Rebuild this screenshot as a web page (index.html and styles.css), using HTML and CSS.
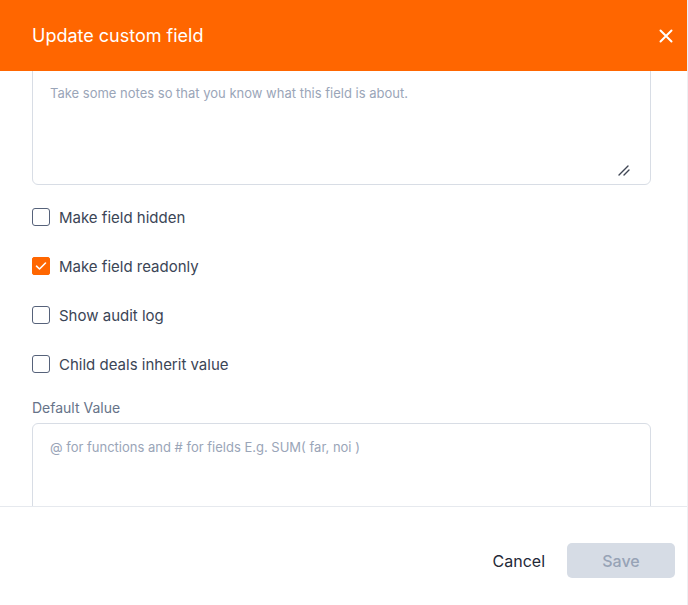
FILE: index.html
```html
<!DOCTYPE html>
<html lang="en">
<head>
  <meta charset="UTF-8">
  <title>Update custom field</title>
  <meta name="viewport" content="width=device-width, initial-scale=1">
  <link rel="stylesheet" href="styles.css">
</head>
<body>

  <div class="modal">
    <!-- Cabeçalho -->
    <div class="modal-header">
      <h3>Update custom field</h3>
      <button class="close" title="Close">
        <svg width="14" height="14" viewBox="0 0 14 14"><path d="M1.5 1.5 L12.5 12.5 M12.5 1.5 L1.5 12.5" stroke="#fff" stroke-width="2" stroke-linecap="round"/></svg>
      </button>
    </div>

    <!-- Corpo com scroll -->
    <div class="modal-body">
      <div class="notes-wrap">
        <textarea class="notes" placeholder="Take some notes so that you know what this field is about."></textarea>
        <svg class="grip" width="12" height="12" viewBox="0 0 12 12"><path d="M1 11 L10 2 M6 11 L11 6" stroke="#3f4654" stroke-width="1.4" stroke-linecap="round"/></svg>
      </div>

      <div class="options">
        <label class="check"><span class="box"></span>Make field hidden</label>
        <label class="check"><span class="box checked">
          <svg width="12" height="10" viewBox="0 0 12 10"><path d="M1.5 5.2 L4.5 8 L10.5 2" fill="none" stroke="#fff" stroke-width="1.6" stroke-linecap="round" stroke-linejoin="round"/></svg>
        </span>Make field readonly</label>
        <label class="check"><span class="box"></span>Show audit log</label>
        <label class="check"><span class="box"></span>Child deals inherit value</label>
      </div>

      <div class="field-label">Default Value</div>
      <textarea class="default" placeholder="@ for functions and # for fields E.g. SUM( far, noi )"></textarea>
    </div>

    <!-- Rodapé -->
    <div class="modal-footer">
      <button class="btn-cancel">Cancel</button>
      <button class="btn-save" disabled>Save</button>
    </div>
  </div>

</body>
</html>
```

FILE: styles.css
```css
body {
  margin: 0;
  font-family: Inter, "Noto Sans", sans-serif;
  background: #fff;
}

.modal {
  width: 688px;
  height: 605px;
  display: flex;
  flex-direction: column;
  border-right: 1px solid #eef0f3;
  box-sizing: border-box;
}

/* Cabeçalho */
.modal-header {
  height: 71px;
  flex: none;
  background: #ff6600;
  display: flex;
  align-items: center;
  justify-content: space-between;
  padding: 0 10px 0 32px;
}

.modal-header h3 {
  margin: 0;
  color: #fff;
  font-size: 18px;
  font-weight: 400;
}

.close {
  background: none;
  border: none;
  padding: 4px;
  display: flex;
  cursor: pointer;
}

/* Corpo */
.modal-body {
  flex: 1;
  overflow: hidden;
  padding: 0 36px 0 32px;
}

textarea {
  display: block;
  width: 100%;
  box-sizing: border-box;
  border: 1px solid #d8dde5;
  border-radius: 6px;
  padding: 17px 17px 14px;
  font-family: inherit;
  font-size: 13px;
  line-height: 20px;
  color: #334155;
  resize: none;
}

textarea::placeholder {
  color: #9aa5b8;
}

.notes-wrap {
  position: relative;
  margin-top: -6px;
}

.notes {
  height: 120px;
}

.grip {
  position: absolute;
  right: 21px;
  bottom: 9px;
}

.options {
  display: flex;
  flex-direction: column;
  gap: 25px;
  margin-top: 20px;
}

.check {
  display: flex;
  align-items: center;
  gap: 9px;
  height: 24px;
  font-size: 15px;
  color: #3b4556;
}

.box {
  width: 18px;
  height: 18px;
  box-sizing: border-box;
  border: 1.5px solid #56627a;
  border-radius: 3px;
  display: flex;
  align-items: center;
  justify-content: center;
}

.box.checked {
  background: #ff6600;
  border-color: #ff6600;
  border-radius: 2px;
}

.field-label {
  margin-top: 23px;
  font-size: 14px;
  color: #667389;
  height: 16px;
}

.default {
  margin-top: 8px;
  height: 110px;
  padding-top: 13px;
}

/* Rodapé */
.modal-footer {
  height: 99px;
  flex: none;
  border-top: 1px solid #e6e9ee;
  box-sizing: border-box;
  display: flex;
  align-items: center;
  justify-content: flex-end;
  gap: 22px;
  padding: 9px 12px 0 32px;
}

.btn-cancel {
  background: none;
  border: none;
  padding: 0;
  font-family: inherit;
  font-size: 16px;
  color: #1f2937;
  cursor: pointer;
}

.btn-save {
  width: 108px;
  height: 35px;
  border: none;
  border-radius: 5px;
  background: #d6dce5;
  color: #97a3b6;
  font-family: inherit;
  font-size: 16px;
  font-weight: 500;
}
```
